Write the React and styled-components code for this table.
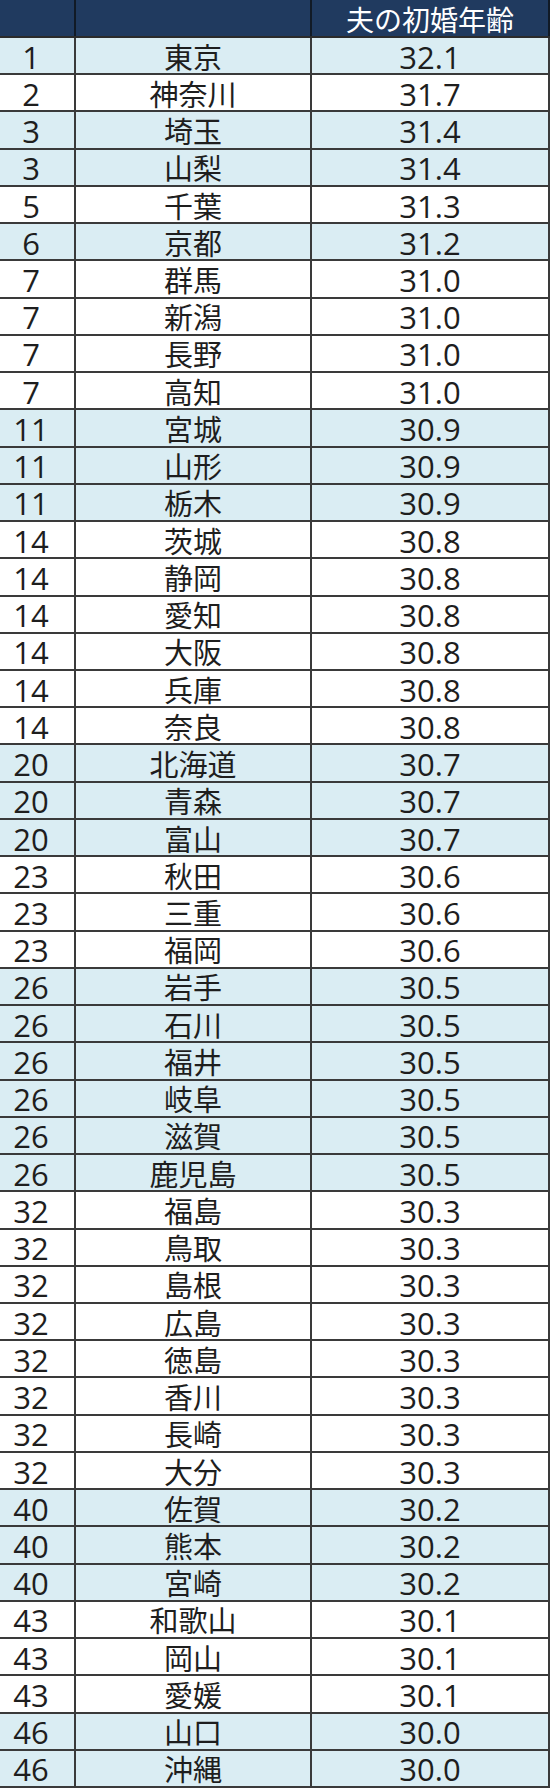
import React from 'react';
import styled, { createGlobalStyle } from 'styled-components';

const GlobalStyle = createGlobalStyle`
  html, body {
    margin: 0;
    padding: 0;
    background: #ffffff;
  }
  * {
    box-sizing: border-box;
  }
`;

const rows = [
  [1, '東京', '32.1'],
  [2, '神奈川', '31.7'],
  [3, '埼玉', '31.4'],
  [3, '山梨', '31.4'],
  [5, '千葉', '31.3'],
  [6, '京都', '31.2'],
  [7, '群馬', '31.0'],
  [7, '新潟', '31.0'],
  [7, '長野', '31.0'],
  [7, '高知', '31.0'],
  [11, '宮城', '30.9'],
  [11, '山形', '30.9'],
  [11, '栃木', '30.9'],
  [14, '茨城', '30.8'],
  [14, '静岡', '30.8'],
  [14, '愛知', '30.8'],
  [14, '大阪', '30.8'],
  [14, '兵庫', '30.8'],
  [14, '奈良', '30.8'],
  [20, '北海道', '30.7'],
  [20, '青森', '30.7'],
  [20, '富山', '30.7'],
  [23, '秋田', '30.6'],
  [23, '三重', '30.6'],
  [23, '福岡', '30.6'],
  [26, '岩手', '30.5'],
  [26, '石川', '30.5'],
  [26, '福井', '30.5'],
  [26, '岐阜', '30.5'],
  [26, '滋賀', '30.5'],
  [26, '鹿児島', '30.5'],
  [32, '福島', '30.3'],
  [32, '鳥取', '30.3'],
  [32, '島根', '30.3'],
  [32, '広島', '30.3'],
  [32, '徳島', '30.3'],
  [32, '香川', '30.3'],
  [32, '長崎', '30.3'],
  [32, '大分', '30.3'],
  [40, '佐賀', '30.2'],
  [40, '熊本', '30.2'],
  [40, '宮崎', '30.2'],
  [43, '和歌山', '30.1'],
  [43, '岡山', '30.1'],
  [43, '愛媛', '30.1'],
  [46, '山口', '30.0'],
  [46, '沖縄', '30.0'],
];

const Sheet = styled.div`
  width: 550px;
  height: 1788px;
  display: flex;
  flex-direction: column;
  font-family: 'Open Sans', 'Noto Sans CJK JP', sans-serif;
  color: #1e1e1e;
  overflow: hidden;
`;

const HeaderRow = styled.div`
  height: 38px;
  flex: none;
  display: grid;
  grid-template-columns: 76px 236px 238px;
  background: #203a5f;
  border-bottom: 2px solid #2b2b2b;
`;

const HeaderCell = styled.div`
  display: flex;
  align-items: center;
  justify-content: center;
  color: #ffffff;
  font-size: 28px;
  line-height: 1;
  font-family: 'Noto Sans CJK JP', sans-serif;
  padding-top: 2px;
  border-right: 2px solid #111a26;
`;

const Row = styled.div`
  flex: 1 1 0;
  min-height: 0;
  overflow: hidden;
  display: grid;
  grid-template-columns: 76px 236px 238px;
  grid-template-rows: 100%;
  background: ${(p) => (p.$shaded ? '#daedf3' : '#ffffff')};
  border-bottom: 2px solid #3a3a3a;
`;

const Cell = styled.div`
  display: flex;
  align-items: center;
  justify-content: center;
  min-height: 0;
  font-size: ${(p) => (p.$kanji ? '29px' : '31px')};
  line-height: 1;
  padding-top: 3px;
  padding-right: ${(p) => (p.$rank ? '12px' : '0')};
  border-right: 2px solid #3a3a3a;
  white-space: nowrap;
`;

export default function App() {
  let group = -1;
  let last = null;
  return (
    <>
      <GlobalStyle />
      <Sheet>
        <HeaderRow>
          <HeaderCell />
          <HeaderCell />
          <HeaderCell>夫の初婚年齢</HeaderCell>
        </HeaderRow>
        {rows.map(([rank, name, age]) => {
          if (rank !== last) {
            group += 1;
            last = rank;
          }
          return (
            <Row key={name} $shaded={group % 2 === 0}>
              <Cell $rank>{rank}</Cell>
              <Cell $kanji>{name}</Cell>
              <Cell>{age}</Cell>
            </Row>
          );
        })}
      </Sheet>
    </>
  );
}
